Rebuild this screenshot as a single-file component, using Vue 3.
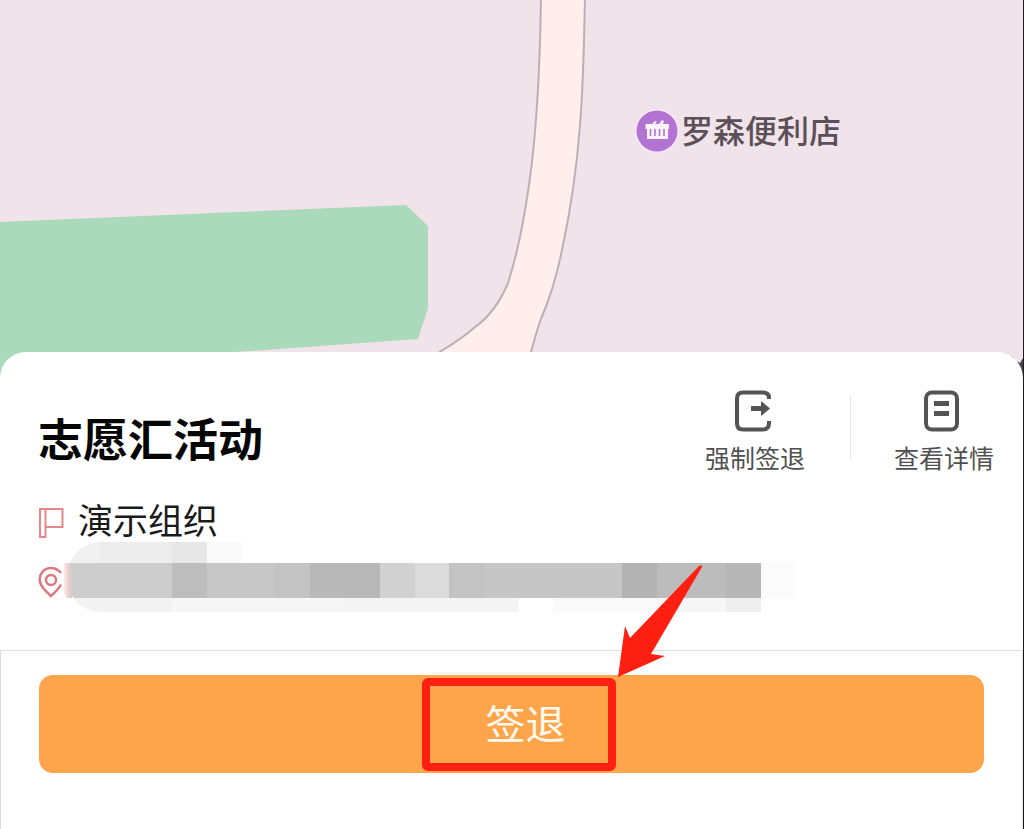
<template>
    <div class="page">
        <div class="map">
            <svg class="map-canvas" viewBox="0 0 1023 384" preserveAspectRatio="xMidYMid slice" aria-hidden="true">
                <rect width="1023" height="384" fill="#f0e3e9" />
                <path d="M0 222 L406 205 L428 226 V308 L418 339 L235 352 L0 384 Z" fill="#abd9bb" />
                <path
                    d="M541 -4 C540 70 537 130 529 185 C524 220 517 255 508 283 C500 302 488 318 475 327 C463 338 451 345 438 353 L420 384 H522 L531 352 C534 342 537 329 541 319 C550 298 557 275 562 250 C570 213 577 165 580 125 C583 90 584 50 585 -4 Z"
                    fill="#ffeeec"
                    stroke="#bdb0b4"
                    stroke-width="2"
                />
                <path d="M1023 358 L1020 363 L1016 361 L1023 384 Z" fill="#4a454b" />
                <circle cx="1012" cy="358" r="1.5" fill="#8c858a" />
            </svg>
            <div class="poi">
                <svg class="poi-icon" viewBox="0 0 44 44" aria-hidden="true">
                    <circle cx="22" cy="22" r="22" fill="#f8e9fa" />
                    <circle cx="22" cy="22" r="20.5" fill="#b273d2" />
                    <path d="M10.500 15 H17 L20 12 L22 13 L20 15 H24 L27 11 L29 12 L28 15 H34 V20 H33 V30 H12 V20 H10.500 Z" fill="#fdf3fd" />
                    <path d="M15.500 20 V27 M20 20 V27 M24.500 20 V27 M29 20 V27" stroke="#b273d2" stroke-width="1.600" />
                </svg>
                <span>罗森便利店</span>
            </div>
        </div>

        <section class="sheet">
            <header class="sheet-header">
                <h1 class="title">志愿汇活动</h1>
                <div class="actions">
                    <button class="action" type="button">
                        <svg class="action-icon" viewBox="0 0 42 42" aria-hidden="true">
                            <path
                                d="M35 9 V8 Q35 2.500 29 2.500 H9 Q3 2.500 3 8.500 V33.500 Q3 39.500 9 39.500 H29 Q35 39.500 35 33 V31"
                                fill="none"
                                stroke="#545454"
                                stroke-width="4"
                            />
                            <path d="M17 16 H27 V11 L36 18.500 L27 26 V21 H17 Z" fill="#545454" />
                        </svg>
                        <span>强制签退</span>
                    </button>
                    <span class="actions-line"></span>
                    <button class="action" type="button">
                        <svg class="action-icon" viewBox="0 0 42 42" aria-hidden="true">
                            <rect x="3" y="2.500" width="31" height="37" rx="6" fill="none" stroke="#545454" stroke-width="4" />
                            <path d="M11 13.500 H26 M11 23.500 H26" stroke="#545454" stroke-width="5" />
                        </svg>
                        <span>查看详情</span>
                    </button>
                </div>
            </header>

            <div class="row org">
                <svg class="row-icon" viewBox="0 0 26 32" aria-hidden="true">
                    <path d="M2 3 H24.500 V21 H7.500 V31 H2 Z M7.500 3 V21" fill="none" stroke="#e8858a" stroke-width="2" />
                </svg>
                <span>演示组织</span>
            </div>
            <div class="row address">
                <svg class="row-icon" viewBox="0 0 26 32" aria-hidden="true">
                    <path
                        d="M23 7 C20 3.500 16.500 2 13 2 C6 2 1.700 7.500 1.700 13.500 C1.700 19.500 7 24.500 13 30 C17 26.500 20.500 23 23 18.500"
                        fill="none"
                        stroke="#dd7880"
                        stroke-width="2.500"
                    />
                    <circle cx="13" cy="14" r="5" fill="none" stroke="#dd7880" stroke-width="2.500" />
                </svg>
                <svg class="mosaic" viewBox="0 0 732 70" aria-hidden="true">
                    <defs>
                        <clipPath id="mosaic-clip">
                            <rect x="3" width="760" height="70" rx="34" />
                        </clipPath>
                        <linearGradient id="mosaic-edge">
                            <stop offset="0" stop-color="#fdecec" />
                            <stop offset="0.5" stop-color="#efcfd0" />
                            <stop offset="1" stop-color="#cdcdcd" />
                        </linearGradient>
                    </defs>
                    <g clip-path="url(#mosaic-clip)">
                        <rect
                            v-for="(cell, index) of cells"
                            :key="index"
                            :x="cell.x"
                            :y="cell.y"
                            :width="cell.width"
                            :height="cell.height"
                            :fill="cell.fill"
                        />
                    </g>
                    <path d="M0 21 H8 V56 H3 L0 52 Z" fill="url(#mosaic-edge)" />
                </svg>
            </div>
        </section>

        <footer class="footer">
            <div class="submit-wrap">
                <button class="submit" type="button">签退</button>
                <div class="callout">
                    <svg class="callout-arrow" viewBox="0 0 84 112" aria-hidden="true">
                        <path d="M0 112 L7 61 L12 73 L81 1 Q84 -1 84 2 L33 89 L47 91 Z" fill="#ff2012" />
                    </svg>
                </div>
            </div>
        </footer>
    </div>
</template>


<script setup>
// 每一行: 纵坐标, 高度, [起点, 终点, 颜色]
const bands = [
    {
        y: 0,
        height: 21,
        blocks: [
            [3, 36, '#f1f1f1'],
            [36, 108, '#ededed'],
            [108, 143, '#e7e7e7'],
            [143, 178, '#fafafa'],
        ],
    },
    {
        y: 21,
        height: 35,
        blocks: [
            [3, 108, '#cdcdcd'],
            [108, 143, '#bdbdbd'],
            [143, 211, '#c7c7c7'],
            [211, 246, '#c3c3c3'],
            [246, 316, '#b8b8b8'],
            [316, 351, '#d1d1d1'],
            [351, 385, '#dbdbdb'],
            [385, 420, '#c3c3c3'],
            [420, 558, '#c6c6c6'],
            [558, 593, '#b3b3b3'],
            [593, 662, '#bcbcbc'],
            [662, 697, '#b7b7b7'],
            [697, 732, '#fbfbfb'],
        ],
    },
    {
        y: 56,
        height: 14,
        blocks: [
            [3, 108, '#f3f3f3'],
            [108, 281, '#f7f7f7'],
            [281, 455, '#f4f4f4'],
            [489, 593, '#fafafa'],
            [593, 662, '#f6f6f6'],
            [662, 697, '#eeeeee'],
        ],
    },
];

const cells = bands.flatMap(({ y, height, blocks }) =>
    blocks.map(([start, end, fill]) => ({ x: start, y, width: end - start, height, fill }))
);
</script>

<style>
body {
    margin: 0;
    background-color: #fff;
}
</style>

<style scoped>
.page {
    box-sizing: border-box;
    display: flex;
    flex-direction: column;
    min-height: 100vh;
    border-right: 1px solid #1c1a1c;
    font-family: "Noto Sans CJK SC", "Noto Sans", sans-serif;
    background-color: #fff;
}

button {
    padding: 0;
    border: none;
    background: none;
    font-family: inherit;
    cursor: pointer;
}

.map {
    position: relative;
    overflow: hidden;
}

.map-canvas {
    display: block;
    width: 100%;
    height: 384px;
}

.poi {
    position: absolute;
    top: 109px;
    left: 635px;
    display: flex;
    align-items: flex-start;
    gap: 2px;
    color: #5c5058;
    font-size: 32px;
    font-weight: 500;
    line-height: 40px;
    white-space: nowrap;
}

.poi-icon {
    width: 44px;
    height: 44px;
}

.sheet {
    position: relative;
    margin-top: -32px;
    padding: 38px 29px 38px 38px;
    border-radius: 26px 26px 0 0;
    background-color: #fff;
}

.sheet-header {
    display: flex;
    justify-content: space-between;
    margin-bottom: 26px;
}

.title {
    margin: 0;
    padding-top: 22px;
    color: #060606;
    font-size: 45px;
    font-weight: 700;
    line-height: 52px;
}

.actions {
    display: flex;
    gap: 43px;
}

.action {
    display: flex;
    flex-direction: column;
    align-items: center;
    gap: 9px;
    color: #505050;
    font-size: 25px;
    line-height: 32px;
}

.action-icon {
    width: 42px;
    height: 42px;
}

.actions-line {
    width: 1px;
    height: 64px;
    margin: 5px 0 0 2px;
    background-color: #e8e8e8;
}

.row {
    display: flex;
    align-items: center;
    color: #1a1a1a;
    font-size: 35px;
    line-height: 40px;
}

.row-icon {
    flex: none;
    width: 26px;
    height: 32px;
}

.org {
    gap: 14px;
    margin-bottom: 3px;
}

.org .row-icon {
    margin-top: 6px;
}

.address .row-icon {
    margin-top: 10px;
}

.mosaic {
    width: 732px;
    height: 70px;
}

.footer {
    flex: 1;
    padding: 24px 38px 38px;
    border: 1px solid #dedede;
    border-bottom: none;
}

.submit-wrap {
    position: relative;
}

.submit {
    display: block;
    width: 100%;
    padding: 18px 0 22px 28px;
    border-radius: 14px;
    background-color: #fea54b;
    color: #fffaf0;
    font-size: 40px;
    font-weight: 400;
    line-height: 58px;
}

.callout {
    position: absolute;
    top: 3px;
    left: calc(50% - 90px);
    box-sizing: border-box;
    width: 194px;
    height: 93px;
    border: 8px solid #ff2012;
    border-radius: 6px;
    pointer-events: none;
}

.callout-arrow {
    position: absolute;
    bottom: 86px;
    left: 188px;
    width: 84px;
    height: 112px;
}
</style>
